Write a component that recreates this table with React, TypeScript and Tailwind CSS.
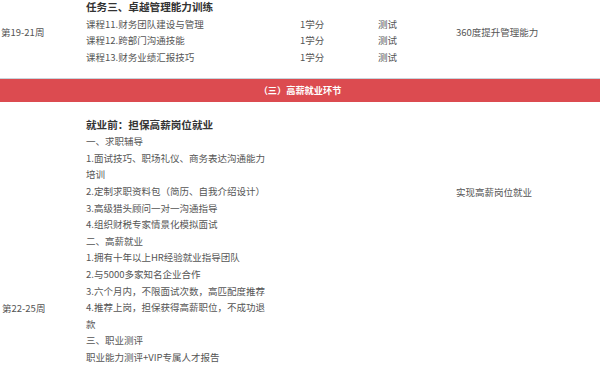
const courses = [
  { name: '课程11.财务团队建设与管理', credit: '1学分', exam: '测试' },
  { name: '课程12.跨部门沟通技能', credit: '1学分', exam: '测试' },
  { name: '课程13.财务业绩汇报技巧', credit: '1学分', exam: '测试' },
];

const jobLines = [
  '一、求职辅导',
  '1.面试技巧、职场礼仪、商务表达沟通能力培训',
  '2.定制求职资料包（简历、自我介绍设计）',
  '3.高级猎头顾问一对一沟通指导',
  '4.组织财税专家情景化模拟面试',
  '二、高薪就业',
  '1.拥有十年以上HR经验就业指导团队',
  '2.与5000多家知名企业合作',
  '3.六个月内，不限面试次数，高匹配度推荐',
  '4.推荐上岗，担保获得高薪职位，不成功退款',
  '三、职业测评',
  '职业能力测评+VIP专属人才报告',
];

export default function App() {
  return (
    <div className="w-[600px] h-[365px] overflow-hidden bg-white text-[#555] text-[9.5px] leading-[16.6px] font-['Noto_Sans_CJK_SC','Noto_Sans',sans-serif]">
      {/* 第19-21周 */}
      <div className="flex -mt-px pb-[12.6px]">
        <div className="w-[86px] flex items-center pl-px">第19-21周</div>
        <div className="w-[370px]">
          <div className="text-[10.6px] font-bold text-[#333]">任务三、卓越管理能力训练</div>
          {courses.map(c => (
            <div key={c.name} className="flex">
              <div className="w-[214px]">{c.name}</div>
              <div className="w-[78px]">{c.credit}</div>
              <div className="w-[78px]">{c.exam}</div>
            </div>
          ))}
        </div>
        <div className="flex-1 flex items-center">360度提升管理能力</div>
      </div>

      {/* section band */}
      <div className="border-t border-[#c8d4dc] h-[24px] bg-[#dc4b50] flex items-center justify-center text-white font-bold text-[9.2px]">
        （三）高薪就业环节
      </div>

      {/* 第22-25周 */}
      <div className="flex min-h-[412px]">
        <div className="w-[86px] flex items-center pl-[2px]">第22-25周</div>
        <div className="w-[370px] pt-[14.7px]">
          <div className="text-[10.6px] font-bold text-[#333]">就业前：担保高薪岗位就业</div>
          <div className="w-[180px]">
            {jobLines.map(l => (
              <div key={l}>{l}</div>
            ))}
          </div>
        </div>
        <div className="flex-1 pt-[82px]">实现高薪岗位就业</div>
      </div>
    </div>
  );
}
